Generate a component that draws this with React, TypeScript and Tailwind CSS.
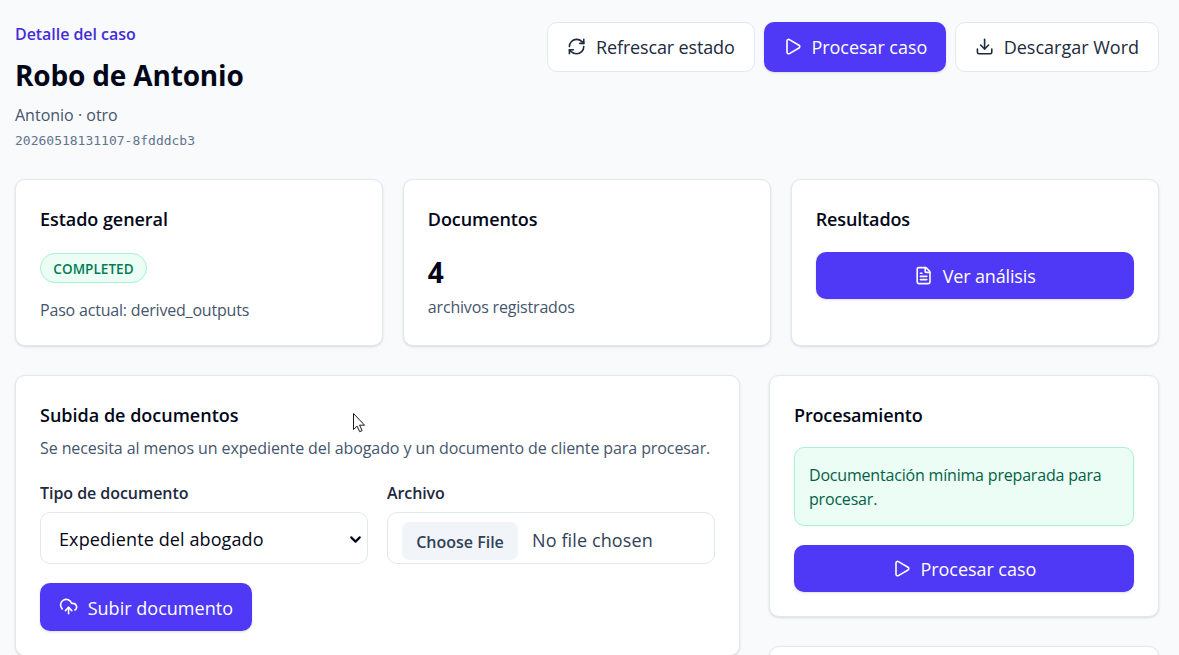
import type { ReactNode } from "react";
import { ChevronDown, CloudUpload, Download, FileText, Play, RefreshCw } from "lucide-react";

function Card({ className = "", children }: { className?: string; children?: ReactNode }) {
  return (
    <section className={`rounded-[10px] border border-slate-200 bg-white px-6 shadow-sm ${className}`}>
      {children}
    </section>
  );
}

function Button({ primary = false, className = "", children }: { primary?: boolean; className?: string; children: ReactNode }) {
  const tone = primary
    ? "bg-indigo-600 text-white shadow-sm"
    : "border border-slate-200 bg-white text-slate-800";
  return (
    <button
      type="button"
      className={`flex items-center justify-center gap-[9.5px] whitespace-nowrap rounded-[10px] text-[18px] leading-6 ${tone} ${className}`}
    >
      {children}
    </button>
  );
}

function Title({ className = "", children }: { className?: string; children: ReactNode }) {
  return <h2 className={`text-[18px] font-semibold leading-6 text-slate-950 ${className}`}>{children}</h2>;
}

function Cursor() {
  return (
    <svg className="absolute left-[352px] top-[412px]" width="14" height="21" viewBox="0 0 14 21" aria-hidden="true">
      <path
        d="M1.5 1.5v16l3.6-3.4 2.6 5.6 2.4-1.1-2.5-5.4h5z"
        fill="#fff"
        stroke="#1a1a1a"
        strokeWidth="1"
      />
    </svg>
  );
}

export default function App() {
  return (
    <main className="relative h-[655px] w-[1179px] overflow-hidden bg-slate-50 pl-[15px] pr-5 pt-[22px] font-['Open_Sans','Noto_Sans',sans-serif]">
      <header className="flex h-[157px] items-start justify-between">
        <div>
          <p className="text-[16px] font-semibold leading-6 tracking-[-0.05px] text-indigo-700">Detalle del caso</p>
          <h1 className="mt-[11px] text-[28px] font-bold leading-9 tracking-[-0.17px] text-slate-950">Robo de Antonio</h1>
          <p className="mt-[10px] text-[16px] leading-6 text-slate-600">Antonio · otro</p>
          <p className="mt-[4px] font-['DejaVu_Sans_Mono',monospace] text-[13px] leading-5 text-slate-500">
            20260518131107-8fdddcb3
          </p>
        </div>
        <div className="flex gap-[9px]">
          <Button className="h-[50px] w-[208px] tracking-[-0.15px]">
            <RefreshCw size={19.2} />
            Refrescar estado
          </Button>
          <Button primary className="h-[50px] w-[182px] tracking-[-0.05px]">
            <Play size={19.2} />
            Procesar caso
          </Button>
          <Button className="h-[50px] w-[204px]">
            <Download size={19.2} />
            Descargar Word
          </Button>
        </div>
      </header>

      <div className="grid h-[167px] grid-cols-3 gap-[19.5px]">
        <Card className="pt-[27px]">
          <Title className="tracking-[-0.05px]">Estado general</Title>
          <span className="mt-[22px] flex h-[30px] w-[107px] items-center justify-center rounded-full border border-emerald-200 bg-emerald-50 pt-[2px] text-[13.5px] font-semibold tracking-[0.05px] text-emerald-700">
            COMPLETED
          </span>
          <p className="mt-[15px] text-[16px] leading-6 tracking-[-0.19px] text-slate-600">Paso actual: derived_outputs</p>
        </Card>
        <Card className="pt-[27px]">
          <Title className="tracking-[-0.08px]">Documentos</Title>
          <p className="mt-[23px] text-[28px] font-bold leading-9 text-slate-950">4</p>
          <p className="mt-[5px] text-[16px] leading-6 tracking-[-0.18px] text-slate-600">archivos registrados</p>
        </Card>
        <Card className="pt-[27px]">
          <Title className="tracking-[-0.13px]">Resultados</Title>
          <Button primary className="mt-[21px] h-[47px] w-full tracking-[-0.15px]">
            <FileText size={19.2} />
            Ver análisis
          </Button>
        </Card>
      </div>

      <div className="mt-[29px] flex items-start gap-[29px]">
        <Card className="h-[281px] w-[725px] pt-[27px]">
          <Title>Subida de documentos</Title>
          <p className="mt-[9px] whitespace-nowrap text-[16px] leading-6 tracking-[-0.09px] text-slate-600">
            Se necesita al menos un expediente del abogado y un documento de cliente para procesar.
          </p>
          <div className="mt-[21px] flex gap-[19px]">
            <div className="w-[328px]">
              <p className="text-[16px] font-semibold leading-6 tracking-[-0.05px] text-slate-800">Tipo de documento</p>
              <div className="mt-[7px] flex h-[52px] items-center justify-between rounded-[10px] border border-slate-200 bg-white pl-[18px] pr-[3px] pt-[2px] text-[18px] tracking-[0.11px] text-slate-950">
                Expediente del abogado
                <ChevronDown size={17} strokeWidth={3} />
              </div>
            </div>
            <div className="w-[328px]">
              <p className="text-[16px] font-semibold leading-6 tracking-[-0.1px] text-slate-800">Archivo</p>
              <div className="mt-[7px] flex h-[52px] items-center rounded-[10px] border border-slate-200 bg-white pl-[14px]">
                <span className="mt-[6px] flex h-[38px] w-[116px] items-center justify-center rounded-[7px] bg-slate-100 pt-[2px] text-[16px] font-semibold text-slate-700">
                  Choose File
                </span>
                <span className="ml-[14px] mt-[4px] text-[18px] leading-6 tracking-[0.12px] text-slate-700">No file chosen</span>
              </div>
            </div>
          </div>
          <Button primary className="mt-[19px] h-[48px] w-[212px] pt-[2px] tracking-[0.02px]">
            <CloudUpload size={19.2} className="mb-[2px]" />
            Subir documento
          </Button>
        </Card>

        <div className="flex w-[390px] flex-col gap-[29px]">
          <Card className="h-[242px] pt-[27px]">
            <Title className="tracking-[-0.15px]">Procesamiento</Title>
            <p className="mt-[20px] h-[79px] rounded-[10px] border border-emerald-200 bg-emerald-50 px-[14px] pt-[15px] text-[16px] leading-6 tracking-[-0.19px] text-emerald-800">
              Documentación mínima preparada para procesar.
            </p>
            <Button primary className="mt-[19px] h-[47px] w-full tracking-[-0.05px]">
              <Play size={19.2} />
              Procesar caso
            </Button>
          </Card>
          <Card className="h-[80px]" />
        </div>
      </div>
      <Cursor />
    </main>
  );
}
